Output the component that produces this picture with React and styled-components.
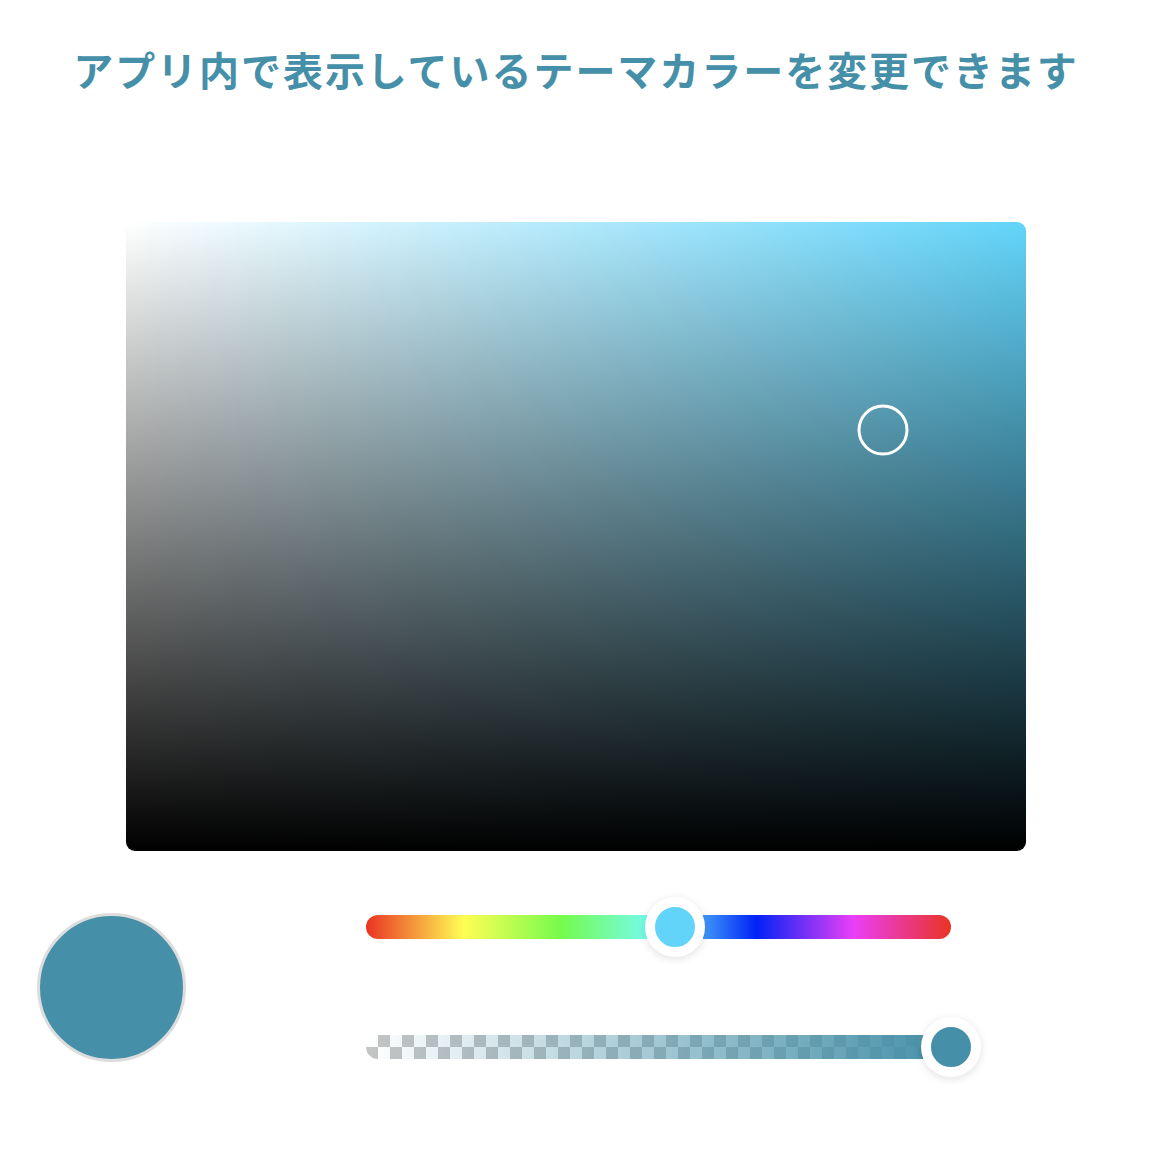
import React, { useState } from 'react';
import styled, { createGlobalStyle } from 'styled-components';

const GlobalStyle = createGlobalStyle`
    html, body {
        margin: 0;
        padding: 0;
        background: #ffffff;
        font-family: "Noto Sans CJK JP", "Noto Sans", sans-serif;
    }
`

const HUE_COLOR = '#62d4fa'
const PICKED = '#4590a8'

const Page = styled.div`
    width: 1152px;
    padding-bottom: 80px;
    display: flex;
    flex-direction: column;
    align-items: center;
`

const Title = styled.h1`
    margin: 0;
    padding-top: 45px;
    font-size: 40px;
    line-height: 48px;
    font-weight: 700;
    letter-spacing: 1.95px;
    color: ${PICKED};
`

const Saturation = styled.div`
    position: relative;
    margin-top: 129px;
    width: 900px;
    height: 629px;
    border-radius: 9px;
    background:
        linear-gradient(to top, #000000, rgba(0, 0, 0, 0)),
        linear-gradient(to right, #ffffff, ${({ $hue }) => $hue});
`

const Pointer = styled.div`
    position: absolute;
    width: 45px;
    height: 45px;
    border: 3.5px solid #ffffff;
    border-radius: 50%;
    transform: translate(-50%, -50%);
`

const Controls = styled.div`
    align-self: stretch;
    display: flex;
    align-items: center;
    padding-left: 37px;
    margin-top: 46px;
`

const Swatch = styled.div`
    width: 143px;
    height: 143px;
    border-radius: 50%;
    border: 3px solid #dddddd;
    background: ${({ $color }) => $color};
`

const Sliders = styled.div`
    margin-left: 180px;
    width: 585px;
    display: flex;
    flex-direction: column;
    gap: 60px;
`

const SliderRow = styled.div`
    position: relative;
    height: 60px;
    display: flex;
    align-items: center;
`

const HueTrack = styled.div`
    width: 100%;
    height: 24px;
    border-radius: 12px;
    background: linear-gradient(to right,
        #ea3323 0%, #fffe54 16.67%, #75fb4c 33.33%, #75fbfd 50%,
        #0023f5 66.67%, #ea3ff7 83.33%, #ea3323 100%);
`

const AlphaTrack = styled.div`
    width: 100%;
    height: 24px;
    border-radius: 12px;
    background:
        linear-gradient(to right, rgba(69, 144, 168, 0), ${PICKED}),
        repeating-conic-gradient(#c4c4c4 0% 25%, #ffffff 0% 50%) 0 0 / 24px 24px;
`

const Thumb = styled.div`
    position: absolute;
    top: 0;
    width: 40px;
    height: 40px;
    border: 10px solid #ffffff;
    border-radius: 50%;
    background: ${({ $color }) => $color};
    box-shadow: 0 2px 8px rgba(0, 0, 0, 0.12);
    transform: translateX(-50%);
`

export default function App() {
    const [sv] = useState({ x: 0.841, y: 0.33 })
    const [hue] = useState(0.528)
    const [alpha] = useState(1)

    return (
        <Page>
            <GlobalStyle />
            <Title>アプリ内で表示しているテーマカラーを変更できます</Title>

            <Saturation $hue={HUE_COLOR}>
                <Pointer style={{ left: `${sv.x * 100}%`, top: `${sv.y * 100}%` }} />
            </Saturation>

            <Controls>
                <Swatch $color={PICKED} />
                <Sliders>
                    <SliderRow>
                        <HueTrack />
                        <Thumb $color={HUE_COLOR} style={{ left: `${hue * 100}%` }} />
                    </SliderRow>
                    <SliderRow>
                        <AlphaTrack />
                        <Thumb $color={PICKED} style={{ left: `${alpha * 100}%` }} />
                    </SliderRow>
                </Sliders>
            </Controls>
        </Page>
    )
}
